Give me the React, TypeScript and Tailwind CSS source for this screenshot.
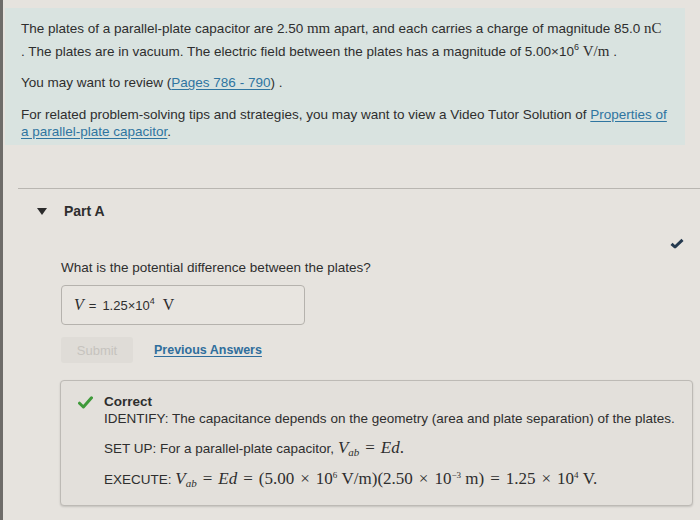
import React from "react";

const serif = "font-['Liberation_Serif',serif]";
const linkClassName = "text-[#2f75a0] underline underline-offset-2";

function Sup({ children }: { children: React.ReactNode }) {
  return <sup className="-top-[6px] text-[9px]">{children}</sup>;
}

function Op({ children }: { children: React.ReactNode }) {
  return <span className="mx-[6px]">{children}</span>;
}

function Vab() {
  return (
    <>
      <i>V</i>
      <sub className="text-[11px] italic">ab</sub>
    </>
  );
}

function GreenCheck() {
  return (
    <svg width="15" height="13" viewBox="0 0 15 13" className="shrink-0">
      <path d="M1.5 7.2 L5.4 11 L13.5 1.8" fill="none" stroke="#3f9a3a" strokeWidth="3" strokeLinecap="round" strokeLinejoin="round" />
    </svg>
  );
}

export default function App() {
  return (
    <div className="flex h-[520px] w-[700px] overflow-hidden bg-[#e6e3de] font-['Liberation_Sans',Arial,sans-serif] text-[#2e2e2e]">
      <div className="w-[3px] shrink-0 bg-[#6e6c69]" />
      <div className="flex-1 pt-[8px]">
        {/* intro */}
        <div className="ml-[2px] w-[680px] bg-[#d9e3e0] px-[16px] pt-[9px] pb-[5px] text-[13.5px] leading-[22px]">
          <p>
            The plates of a parallel-plate capacitor are 2.50 <span className={`${serif} text-[15px]`}>mm</span> apart, and each carries a
            charge of magnitude 85.0 <span className={`${serif} text-[15px]`}>nC</span>
            <br />. The plates are in vacuum. The electric field between the plates has a magnitude of 5.00×10<Sup>6</Sup>{" "}
            <span className={`${serif} text-[15px]`}>V/m</span> .
          </p>
          <p className="mt-[9px]">
            You may want to review (<span className={linkClassName}>Pages 786 - 790</span>) .
          </p>
          <p className="mt-[12px] leading-[17px]">
            For related problem-solving tips and strategies, you may want to view a Video Tutor Solution of{" "}
            <span className={linkClassName}>Properties of</span>
            <br />
            <span className={linkClassName}>a parallel-plate capacitor</span>.
          </p>
        </div>

        {/* part A */}
        <div className="mt-[43px] ml-[15px] border-t border-[#b9b6b1]">
          <div className="flex items-center pt-[12px]">
            <svg width="10" height="7" viewBox="0 0 10 7" className="ml-[19px]">
              <path d="M0 0 H10 L5 7 Z" fill="#2b2b2b" />
            </svg>
            <span className="ml-[17px] text-[14px] font-bold">Part A</span>
          </div>
          <div className="flex justify-end pr-[16px] pt-[16px]">
            <svg width="14" height="11" viewBox="0 0 14 11">
              <path d="M1.5 5.8 L5 9 L12.5 1.8" fill="none" stroke="#253a4f" strokeWidth="3" strokeLinejoin="round" />
            </svg>
          </div>
          <div className="ml-[43px]">
            <p className="mt-[9px] text-[13.5px]">What is the potential difference between the plates?</p>
            <div className="mt-[7px] flex h-[40px] w-[244px] items-center rounded-[4px] border border-[#b5b2ad] bg-[#e8e5e0] px-[12px] text-[13px]">
              <span className={`${serif} text-[16px] italic`}>V</span>
              <span className="ml-[5px]">=</span>
              <span className="ml-[6px]">
                1.25×10<Sup>4</Sup>
              </span>
              <span className={`${serif} ml-[8px] text-[16px]`}>V</span>
            </div>
            <div className="mt-[12px] flex items-center">
              <div className="flex h-[26px] w-[72px] items-center justify-center rounded-[3px] bg-[#dfdcd7] text-[13px] text-[#c6c3be]">
                Submit
              </div>
              <span className="ml-[21px] text-[12.5px] font-bold text-[#2f6e9c] underline underline-offset-2">
                Previous Answers
              </span>
            </div>
          </div>
          <div className="mt-[17px] ml-[42px] mr-[7px] rounded-[4px] border border-[#bdbab5] bg-[#e3e0db] pt-[13px] pb-[15px] pl-[17px] pr-[10px] shadow-[0_1px_2px_rgba(0,0,0,0.15)]">
            <div className="flex items-start">
              <div className="pt-[2px]">
                <GreenCheck />
              </div>
              <div className="ml-[11px] text-[13.5px]">
                <p className="font-bold leading-[16px]">Correct</p>
                <p className="leading-[18px]">
                  IDENTIFY: The capacitance depends on the geometry (area and plate separation) of the plates.
                </p>
                <p className="mt-[10px] leading-[20px]">
                  SET UP: For a parallel-plate capacitor,{" "}
                  <span className={`${serif} text-[17px]`}>
                    <Vab />
                    <Op>=</Op>
                    <i>Ed</i>.
                  </span>
                </p>
                <p className="mt-[10px] leading-[20px]">
                  EXECUTE:{" "}
                  <span className={`${serif} text-[17px]`}>
                    <Vab />
                    <Op>=</Op>
                    <i>Ed</i>
                    <Op>=</Op>
                    (5.00<Op>×</Op>10<Sup>6</Sup>&nbsp;V/m)(2.50<Op>×</Op>10<Sup>−3</Sup>&nbsp;m)<Op>=</Op>1.25<Op>×</Op>10
                    <Sup>4</Sup>&nbsp;V.
                  </span>
                </p>
              </div>
            </div>
          </div>
        </div>
      </div>
    </div>
  );
}
